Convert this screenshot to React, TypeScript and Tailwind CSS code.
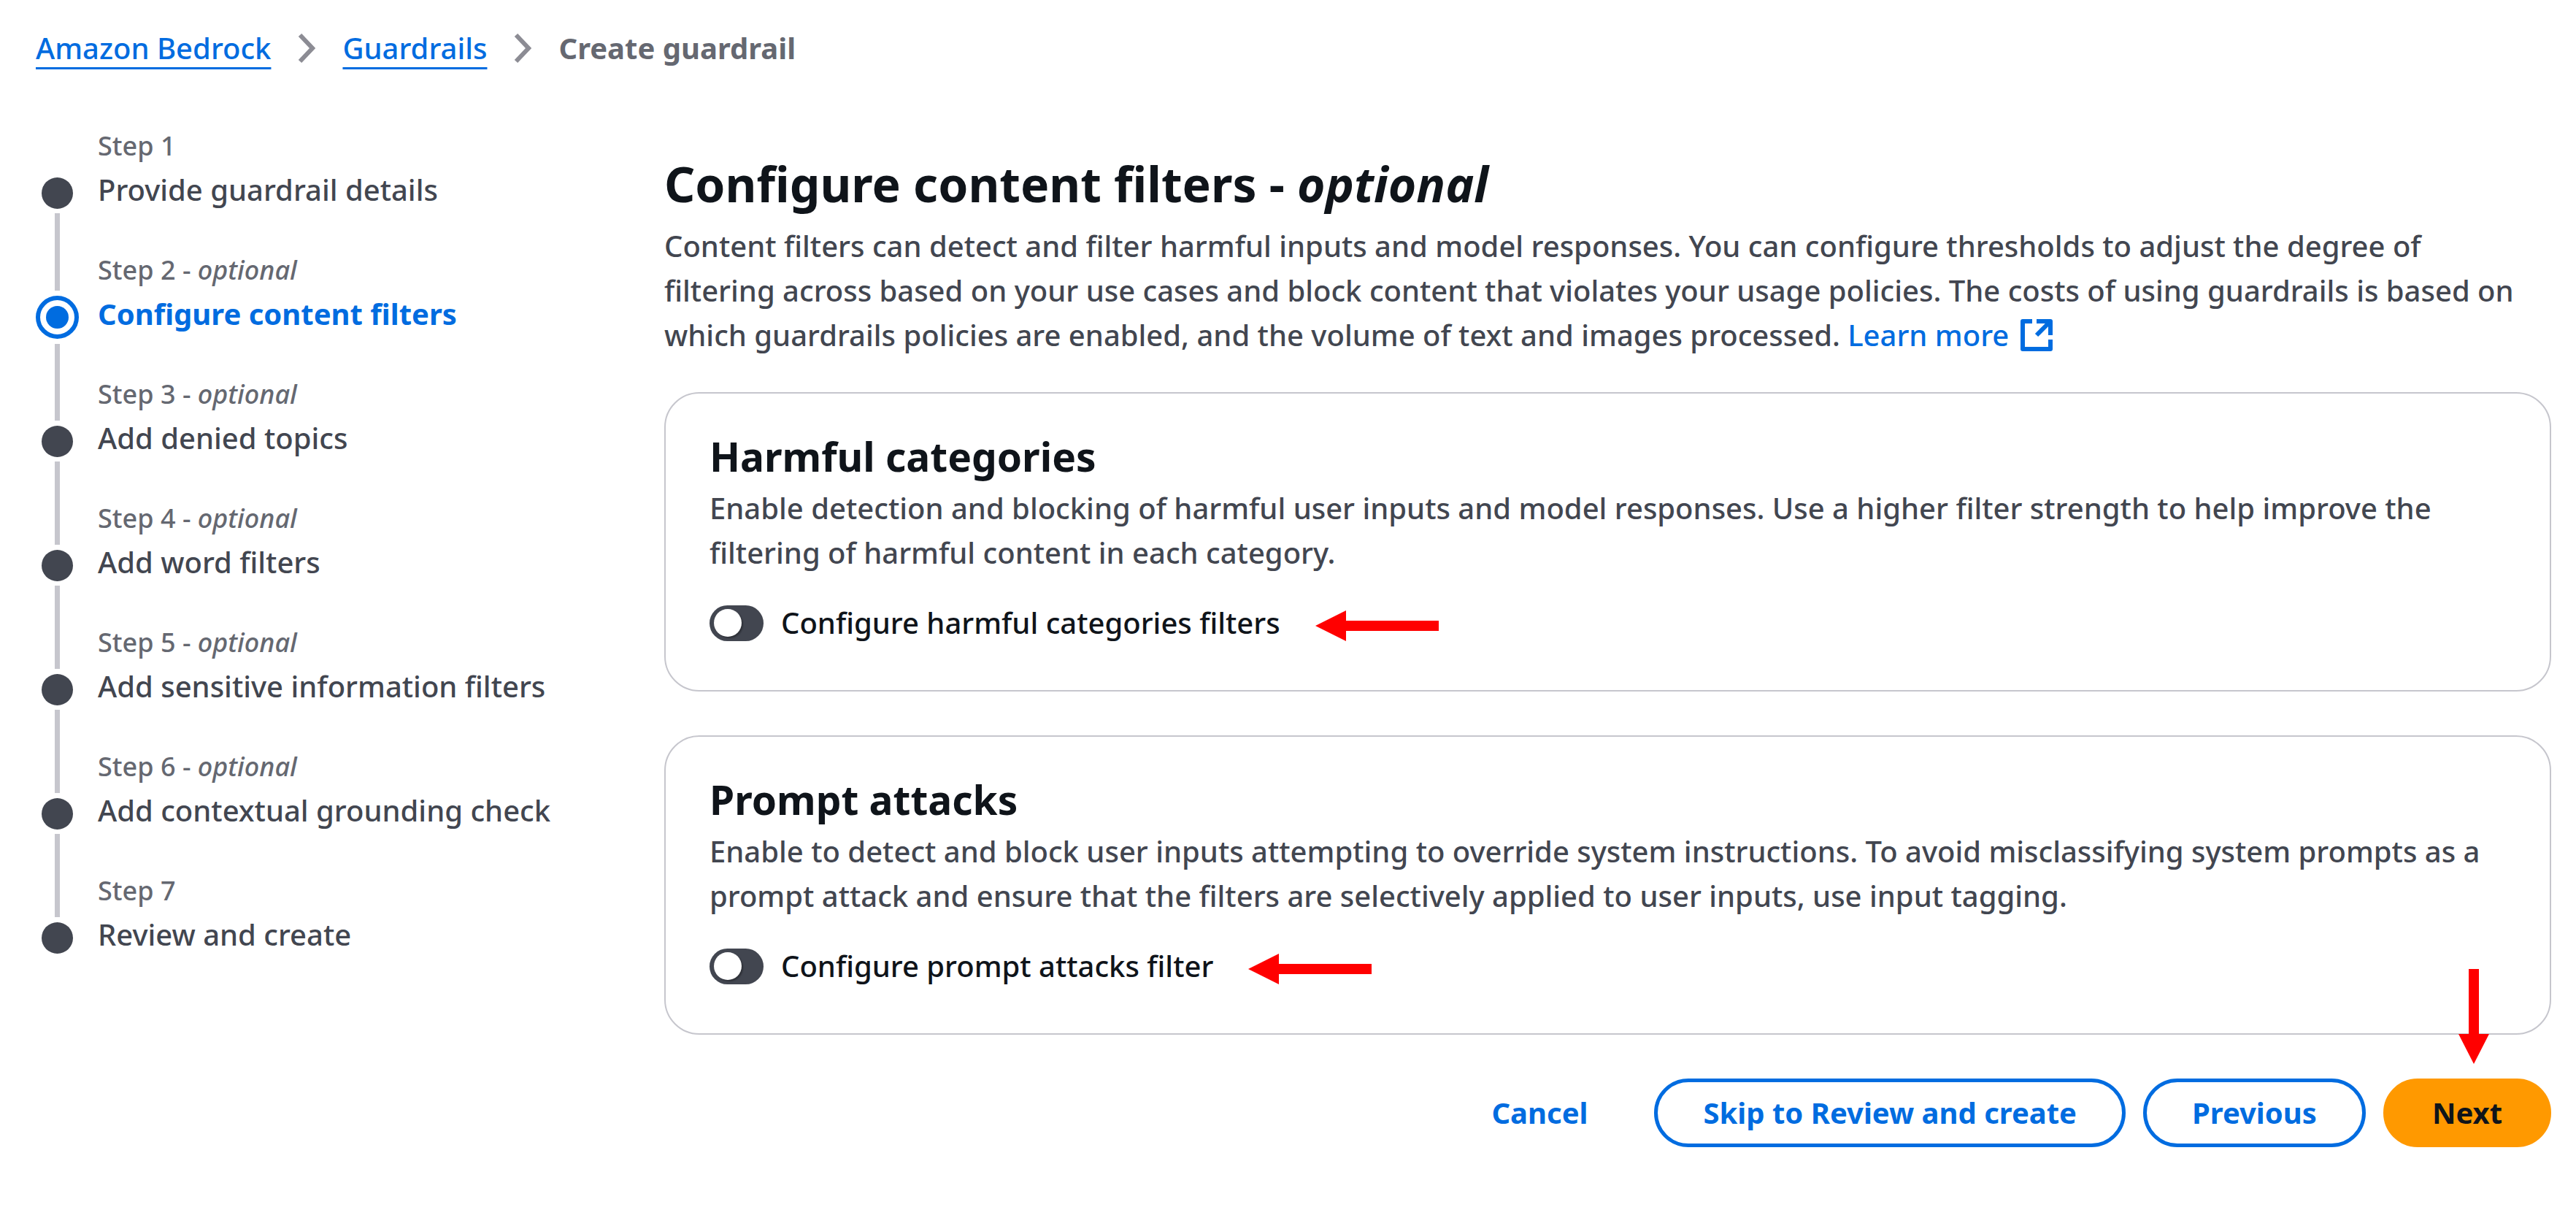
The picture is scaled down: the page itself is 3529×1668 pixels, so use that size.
import React from "react";

type Step = { label: string; title: string; optional?: boolean; active?: boolean };

const steps: Step[] = [
  { label: "Step 1", title: "Provide guardrail details" },
  { label: "Step 2", title: "Configure content filters", optional: true, active: true },
  { label: "Step 3", title: "Add denied topics", optional: true },
  { label: "Step 4", title: "Add word filters", optional: true },
  { label: "Step 5", title: "Add sensitive information filters", optional: true },
  { label: "Step 6", title: "Add contextual grounding check", optional: true },
  { label: "Step 7", title: "Review and create" },
];

function Chevron() {
  return (
    <svg
      className="mx-[37px] h-10 w-6 shrink-0 text-[#8c8c94]"
      viewBox="0 0 24 40"
      fill="none"
      stroke="currentColor"
      strokeWidth="6"
      aria-hidden="true"
    >
      <path d="M3 2L20 20L3 38" />
    </svg>
  );
}

function ExternalIcon() {
  return (
    <svg
      className="ml-4 inline-block size-11 align-[-7px]"
      viewBox="0 0 44 44"
      fill="none"
      stroke="currentColor"
      strokeWidth="6"
      strokeLinejoin="round"
      aria-hidden="true"
    >
      <path d="M16 3H3V41H41V28" />
      <path d="M22 3H41V22" />
      <path d="M22 22L40 4" />
    </svg>
  );
}

function LeftArrow() {
  return (
    <svg className="mt-2 ml-12 h-[42px] w-[169px] shrink-0" viewBox="0 0 169 42" fill="#ff0000" aria-hidden="true">
      <path d="M0 21L42 0V14H169V28H42V42Z" />
    </svg>
  );
}

function DownArrow() {
  return (
    <svg
      className="pointer-events-none absolute right-[85px] bottom-full mb-5 h-[130px] w-[42px]"
      viewBox="0 0 42 130"
      fill="#ff0000"
      aria-hidden="true"
    >
      <path d="M21 130L0 89H14V0H28V89H42Z" />
    </svg>
  );
}

function Marker({ active, first, last }: { active?: boolean; first: boolean; last: boolean }) {
  const line = first ? "invisible" : "bg-[#c6c6cd]";
  return (
    <div className="flex w-[59px] flex-col items-center" aria-hidden="true">
      <div className={`w-[7px] shrink-0 ${active ? "h-[58px]" : "h-[66px]"} ${line}`} />
      {active ? (
        <div className="my-[7px] flex size-[59px] shrink-0 items-center justify-center rounded-full border-[6px] border-[#006ce0]">
          <div className="size-[31px] rounded-full bg-[#006ce0]" />
        </div>
      ) : (
        <div className="mt-[7px] mb-[6px] size-[43px] shrink-0 rounded-full bg-[#424650]" />
      )}
      {!last && <div className="w-[7px] grow bg-[#c6c6cd]" />}
    </div>
  );
}

function FilterCard({ id, title, description, label }: { id: string; title: string; description: string; label: string }) {
  return (
    <section className="rounded-[48px] border-2 border-[#c6c6cd] px-[60px] pt-[50px] pb-[62px]">
      <h2 className="text-[55px] leading-[72px] font-bold text-[#0f141a]">{title}</h2>
      <p className="mt-1 leading-[61px]">{description}</p>
      <div className="mt-9 flex items-center">
        <input
          id={id}
          type="checkbox"
          role="switch"
          className="flex h-[49px] w-[74px] shrink-0 appearance-none items-center rounded-full bg-[#424650] px-[6px] before:size-[38px] before:rounded-full before:bg-white before:shadow-[2px_2px_2px_rgba(0,0,0,0.3)] before:content-[''] checked:justify-end checked:bg-[#006ce0]"
        />
        <label htmlFor={id} className="ml-6 text-[#0f141a]">
          {label}
        </label>
        <LeftArrow />
      </div>
    </section>
  );
}

const button = "rounded-full border-[5px] px-[62px] py-3 font-bold";

export default function App() {
  return (
    <div className="min-h-screen bg-white pt-9 pr-[34px] pb-24 pl-[49px] font-['Noto_Sans','Open_Sans',sans-serif] text-[40px] leading-[60px] font-medium text-[#424650]">
      <nav aria-label="Breadcrumbs">
        <ol className="flex items-center">
          <li>
            <a
              href="#bedrock"
              className="text-[#006ce0] underline decoration-[3px] underline-offset-[11px] [text-decoration-skip-ink:none]"
            >
              Amazon Bedrock
            </a>
          </li>
          <li className="flex items-center">
            <Chevron />
            <a
              href="#guardrails"
              className="text-[#006ce0] underline decoration-[3px] underline-offset-[11px] [text-decoration-skip-ink:none]"
            >
              Guardrails
            </a>
          </li>
          <li className="flex items-center font-bold text-[#656871]" aria-current="page">
            <Chevron />
            Create guardrail
          </li>
        </ol>
      </nav>

      <div className="grid grid-cols-[861px_minmax(0,1fr)]">
        <nav aria-label="Steps" className="pt-[74px]">
          <ol>
            {steps.map((step, i) => {
              const last = i === steps.length - 1;
              return (
                <li key={step.label} className="flex gap-[26px]">
                  <Marker active={step.active} first={i === 0} last={last} />
                  <div className={last ? "" : "pb-[50px]"}>
                    <div className="text-[36px] leading-[60px] text-[#656871]">
                      {step.label}
                      {step.optional && (
                        <>
                          {" - "}
                          <em>optional</em>
                        </>
                      )}
                    </div>
                    <a
                      href={`#step-${i + 1}`}
                      aria-current={step.active ? "step" : undefined}
                      className={`block ${step.active ? "font-bold text-[#006ce0]" : ""}`}
                    >
                      {step.title}
                    </a>
                  </div>
                </li>
              );
            })}
          </ol>
        </nav>

        <main className="pt-[110px]">
          <h1 className="text-[66px] leading-[90px] font-bold text-[#0f141a]">
            Configure content filters - <em>optional</em>
          </h1>
          <p className="mt-[10px] pr-12 leading-[61px]">
            Content filters can detect and filter harmful inputs and model responses. You can configure thresholds to
            adjust the degree of filtering across based on your use cases and block content that violates your usage
            policies. The costs of using guardrails is based on which guardrails policies are enabled, and the volume of
            text and images processed.{" "}
            <a href="#learn-more" className="whitespace-nowrap text-[#006ce0]">
              Learn more
              <ExternalIcon />
            </a>
          </p>

          <div className="mt-12 flex flex-col gap-[60px]">
            <FilterCard
              id="harmful-categories"
              title="Harmful categories"
              description="Enable detection and blocking of harmful user inputs and model responses. Use a higher filter strength to help improve the filtering of harmful content in each category."
              label="Configure harmful categories filters"
            />
            <FilterCard
              id="prompt-attacks"
              title="Prompt attacks"
              description="Enable to detect and block user inputs attempting to override system instructions. To avoid misclassifying system prompts as a prompt attack and ensure that the filters are selectively applied to user inputs, use input tagging."
              label="Configure prompt attacks filter"
            />
            <div className="flex justify-end gap-6">
              <button type="button" className={`${button} border-transparent text-[#006ce0]`}>
                Cancel
              </button>
              <button type="button" className={`${button} border-[#006ce0] text-[#006ce0]`}>
                Skip to Review and create
              </button>
              <button type="button" className={`${button} border-[#006ce0] text-[#006ce0]`}>
                Previous
              </button>
              <div className="relative">
                <DownArrow />
                <button type="button" className={`${button} border-[#ff9900] bg-[#ff9900] text-[#0f141a]`}>
                  Next
                </button>
              </div>
            </div>
          </div>
        </main>
      </div>
    </div>
  );
}
